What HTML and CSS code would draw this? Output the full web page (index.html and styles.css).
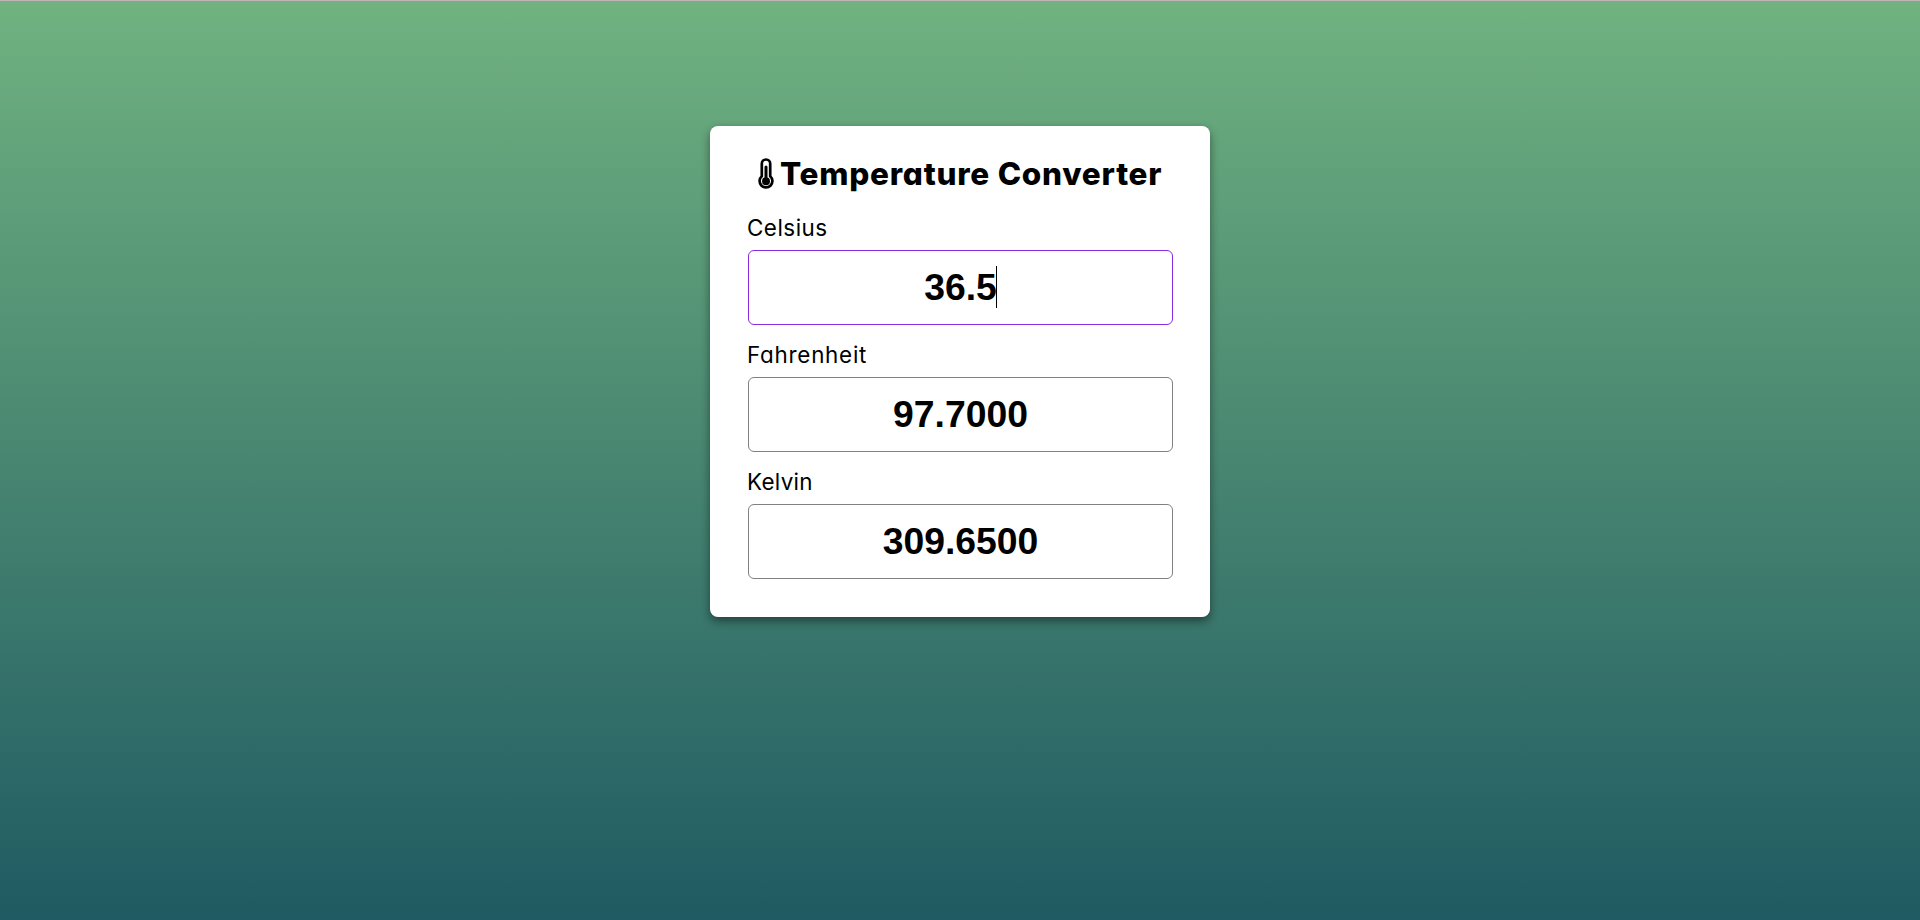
FILE: index.html
```html
<!DOCTYPE html>
<html lang="en">
<head>
<meta charset="utf-8">
<title>Temperature Converter</title>
<link rel="stylesheet" href="styles.css">
</head>
<body>
<main class="card">
  <h1 class="title">
    <svg class="thermo" viewBox="0 0 16 32" aria-hidden="true">
      <path d="M3.8 18.2V5.7a4.2 4.2 0 0 1 8.4 0v12.5a6.4 6.4 0 1 1-8.4 0z" fill="none" stroke="#000" stroke-width="2.7"/>
      <path d="M8 9v14" stroke="#000" stroke-width="3" stroke-linecap="round"/>
      <circle cx="8" cy="23.2" r="4"/>
    </svg>
    <span class="title-text">Temperature Converter</span>
  </h1>
  <div class="field">
    <label class="label celsius" for="celsius">Celsius</label>
    <div class="box active" id="celsius"><span class="value">36.5<i class="caret"></i></span></div>
  </div>
  <div class="field">
    <label class="label fahrenheit" for="fahrenheit">Fahrenheit</label>
    <div class="box" id="fahrenheit">97.7000</div>
  </div>
  <div class="field">
    <label class="label kelvin" for="kelvin">Kelvin</label>
    <div class="box" id="kelvin">309.6500</div>
  </div>
</main>
</body>
</html>
```
FILE: styles.css
```css
* { box-sizing: border-box; margin: 0; padding: 0; }
body {
  height: 920px;
  overflow: hidden;
  border-top: 1px solid #c0b4b8;
  background: linear-gradient(to bottom, #71b280, #1f5a62) no-repeat;
  font-family: Inter, "Open Sans", sans-serif;
  font-feature-settings: "cv11";
  color: #000;
}
.card {
  width: 500px;
  height: 491px;
  margin: 125px auto 0;
  padding: 25px 37px 0 38px;
  border-radius: 8px;
  background: #fff;
  box-shadow: 0 4px 10px rgba(0, 0, 0, .45);
}
.title {
  display: flex;
  align-items: center;
  height: 48px;
  padding-left: 10px;
  font-size: 31.5px;
  font-weight: 800;
  white-space: nowrap;
}
.thermo { width: 16px; height: 32px; margin: -2px 6px 0 0; flex: none; }
.title-text { margin-top: -3px; letter-spacing: .75px; }
.field { height: 127px; padding-top: 12px; }
.label {
  display: block;
  height: 39px;
  line-height: 33px;
  font-size: 22.4px;
  text-indent: -1px;
}
.celsius { letter-spacing: .5px; }
.fahrenheit { letter-spacing: .75px; }
.kelvin { letter-spacing: .3px; }
.box {
  display: flex;
  align-items: center;
  justify-content: center;
  height: 75px;
  border: 1px solid #808080;
  border-radius: 6px;
  font: 700 37.33px "Liberation Sans", Arial, sans-serif;
}
.active { border-color: #8a2be2; }
.value { position: relative; }
.caret {
  position: absolute;
  right: 0;
  top: 0;
  width: 1px;
  height: 42px;
  background: #000;
}
```
